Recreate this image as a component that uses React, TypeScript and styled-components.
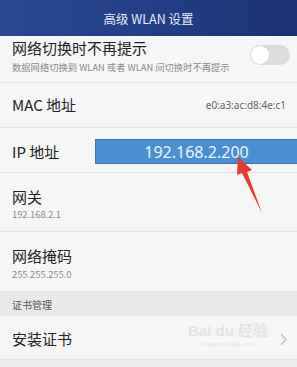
import React from "react";
import styled, { createGlobalStyle } from "styled-components";

const Global = createGlobalStyle`
  html, body { margin: 0; padding: 0; background: #f6f6f6; }
  body { font-family: "Noto Sans CJK SC", "Noto Sans", sans-serif; }
  * { box-sizing: border-box; }
`;

const Page = styled.div`
  position: relative;
  width: 297px;
  height: 367px;
  overflow: hidden;
  background: #f6f6f6;
`;

const Header = styled.div`
  height: 36px;
  display: flex;
  align-items: center;
  justify-content: center;
  background: linear-gradient(90deg, #2a4790 0%, #223d84 55%, #1b3273 100%);
  color: #e9edf6;
  font-size: 12.5px;
`;

const Row = styled.div<{ $h: number; $top?: number; $center?: boolean }>`
  height: ${(p) => p.$h}px;
  display: flex;
  align-items: ${(p) => (p.$center ? "center" : "flex-start")};
  padding: ${(p) => p.$top ?? 0}px 0 0 12px;
  border-bottom: 1px solid #e3e3e3;
  position: relative;
`;

const TextCol = styled.div`
  display: flex;
  flex-direction: column;
  flex: 1;
`;

const Title = styled.div`
  font-size: 15px;
  line-height: 20px;
  color: #222;
`;

const Sub = styled.div<{ $gap: number }>`
  font-size: 9.3px;
  line-height: 12px;
  color: #8a8a8a;
  margin-top: ${(p) => p.$gap}px;
  white-space: nowrap;
`;

const Value = styled.div`
  font-size: 10px;
  color: #666;
  margin-right: 11px;
  font-family: "Noto Sans", sans-serif;
`;

const Toggle = styled.div`
  width: 40px;
  height: 20px;
  border-radius: 10px;
  background: #dcdcdc;
  margin: 7px 7px 0 0;
  display: flex;
  align-items: center;
  padding-left: 1px;
`;

const Knob = styled.div`
  width: 18px;
  height: 18px;
  border-radius: 50%;
  background: #fff;
`;

const IpBox = styled.div`
  margin-left: auto;
  width: 202px;
  height: 25px;
  background: #4b8fd3;
  border: 1px solid #3a73b0;
  border-right: none;
  display: flex;
  align-items: center;
  justify-content: center;
  color: #eef4ff;
  font-family: "Noto Sans", sans-serif;
  font-size: 16px;
`;

const Section = styled.div`
  height: 24px;
  display: flex;
  align-items: center;
  padding-left: 12px;
  background: #e9e9e9;
  font-size: 10px;
  color: #555;
`;

const Chevron = styled.svg`
  margin-right: 10px;
`;

const Watermark = styled.div`
  position: absolute;
  left: 180px;
  top: 322px;
  width: 96px;
  display: flex;
  flex-direction: column;
  align-items: center;
  color: #e4e4e4;
  white-space: nowrap;
  pointer-events: none;
`;

const WmTop = styled.div`
  font-family: "Liberation Sans", "Noto Sans CJK SC", sans-serif;
  font-size: 15px;
  font-weight: bold;
  line-height: 18px;
`;

const WmUrl = styled.div`
  font-family: "Liberation Serif", serif;
  font-size: 7px;
  line-height: 9px;
`;

const Bottom = styled.div`
  height: 7px;
  background: #ececec;
`;

const Arrow = styled.svg`
  position: absolute;
  left: 230px;
  top: 150px;
`;

export default function App() {
  return (
    <Page>
      <Global />
      <Header>高级 WLAN 设置</Header>
      <Row $h={47} $top={2}>
        <TextCol>
          <Title>网络切换时不再提示</Title>
          <Sub $gap={3}>数据网络切换到 WLAN 或者 WLAN 间切换时不再提示</Sub>
        </TextCol>
        <Toggle>
          <Knob />
        </Toggle>
      </Row>
      <Row $h={45} $center>
        <TextCol>
          <Title>MAC 地址</Title>
        </TextCol>
        <Value>e0:a3:ac:d8:4e:c1</Value>
      </Row>
      <Row $h={45} $center $top={3}>
        <Title>IP 地址</Title>
        <IpBox>192.168.2.200</IpBox>
      </Row>
      <Row $h={59} $top={14}>
        <TextCol>
          <Title>网关</Title>
          <Sub $gap={1}>192.168.2.1</Sub>
        </TextCol>
      </Row>
      <Row $h={60} $top={14}>
        <TextCol>
          <Title>网络掩码</Title>
          <Sub $gap={2}>255.255.255.0</Sub>
        </TextCol>
      </Row>
      <Section>证书管理</Section>
      <Row $h={44} $center $top={3}>
        <TextCol>
          <Title>安装证书</Title>
        </TextCol>
        <Chevron width="7" height="13" viewBox="0 0 7 13">
          <path d="M1 1 L6 6.5 L1 12" fill="none" stroke="#bdbdbd" strokeWidth="1.2" />
        </Chevron>
      </Row>
      <Bottom />
      <Watermark>
        <WmTop>Bai du 经验</WmTop>
        <WmUrl>jingyan.baidu.com</WmUrl>
      </Watermark>
      <Arrow width="40" height="70" viewBox="0 0 40 70">
        <path d="M8 7 L22 20 L17 22 L32 63 L12 23 L7 25 Z" fill="#e53935" />
      </Arrow>
    </Page>
  );
}
